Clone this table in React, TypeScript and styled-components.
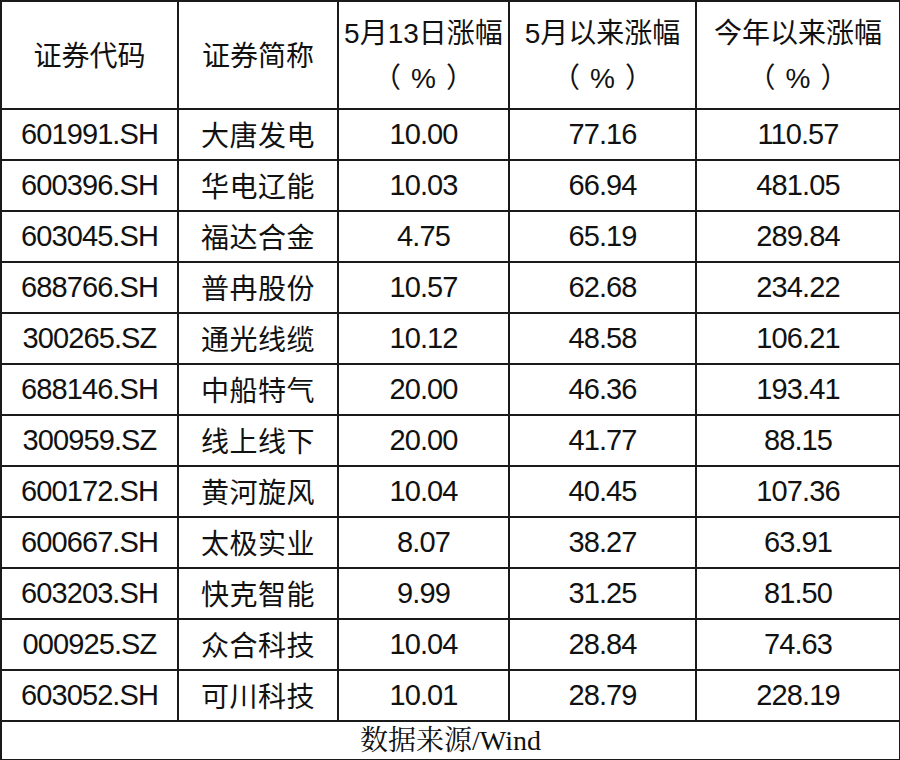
import React from "react";
import styled, { createGlobalStyle } from "styled-components";

const GlobalStyle = createGlobalStyle`
  html, body {
    margin: 0;
    padding: 0;
    background: #fff;
  }
`;

const Table = styled.table`
  width: 899px;
  margin: 0;
  border-collapse: collapse;
  table-layout: fixed;
  font-family: "Liberation Sans", Arial, "Noto Sans CJK SC", sans-serif;
  color: #111;
`;

const HeadCell = styled.th`
  height: 106px;
  padding: 0;
  border: 2px solid #1a1a1a;
  font-size: 28px;
  font-weight: normal;
  line-height: 43px;
  text-align: center;
  vertical-align: middle;
  white-space: nowrap;
`;

const Cell = styled.td<{ $cjk?: boolean }>`
  height: 49px;
  padding: 0;
  border: 2px solid #1a1a1a;
  font-size: ${p => (p.$cjk ? "28px" : "29px")};
  line-height: 49px;
  font-family: ${p =>
    p.$cjk
      ? `"Noto Sans CJK SC", "Liberation Sans", sans-serif`
      : `"Liberation Sans", Arial, sans-serif`};
  letter-spacing: ${p => (p.$cjk ? "0.5px" : "-0.9px")};
  text-align: center;
  vertical-align: middle;
  white-space: nowrap;
  overflow: hidden;
`;

const HeadText = styled.span`
  font-family: "Noto Sans CJK SC", "Liberation Sans", sans-serif;
`;

const Pct = styled.span`
  display: inline-block;
  padding: 0 10px;
  font-family: "Liberation Sans", Arial, sans-serif;
`;

const SourceCell = styled.td`
  height: 37px;
  padding: 0;
  border: 2px solid #1a1a1a;
  font-family: "Liberation Serif", "Noto Serif CJK SC", "Noto Sans CJK SC", serif;
  font-size: 28px;
  text-align: center;
  vertical-align: middle;
  line-height: 37px;
  overflow: hidden;
`;

const rows: [string, string, string, string, string][] = [
  ["601991.SH", "大唐发电", "10.00", "77.16", "110.57"],
  ["600396.SH", "华电辽能", "10.03", "66.94", "481.05"],
  ["603045.SH", "福达合金", "4.75", "65.19", "289.84"],
  ["688766.SH", "普冉股份", "10.57", "62.68", "234.22"],
  ["300265.SZ", "通光线缆", "10.12", "48.58", "106.21"],
  ["688146.SH", "中船特气", "20.00", "46.36", "193.41"],
  ["300959.SZ", "线上线下", "20.00", "41.77", "88.15"],
  ["600172.SH", "黄河旋风", "10.04", "40.45", "107.36"],
  ["600667.SH", "太极实业", "8.07", "38.27", "63.91"],
  ["603203.SH", "快克智能", "9.99", "31.25", "81.50"],
  ["000925.SZ", "众合科技", "10.04", "28.84", "74.63"],
  ["603052.SH", "可川科技", "10.01", "28.79", "228.19"],
];

const widths = [177, 160, 171, 187, 204];

const PctLine = () => (
  <HeadText>
    （<Pct>%</Pct>）
  </HeadText>
);

export default function App() {
  return (
    <>
      <GlobalStyle />
      <Table>
        <colgroup>
          {widths.map((w, i) => (
            <col key={i} style={{ width: w }} />
          ))}
        </colgroup>
        <thead>
          <tr>
            <HeadCell>
              <HeadText>证券代码</HeadText>
            </HeadCell>
            <HeadCell>
              <HeadText>证券简称</HeadText>
            </HeadCell>
            <HeadCell>
              5<HeadText>月</HeadText>13<HeadText>日涨幅</HeadText>
              <br />
              <PctLine />
            </HeadCell>
            <HeadCell>
              5<HeadText>月以来涨幅</HeadText>
              <br />
              <PctLine />
            </HeadCell>
            <HeadCell>
              <HeadText>今年以来涨幅</HeadText>
              <br />
              <PctLine />
            </HeadCell>
          </tr>
        </thead>
        <tbody>
          {rows.map(r => (
            <tr key={r[0]}>
              <Cell>{r[0]}</Cell>
              <Cell $cjk>{r[1]}</Cell>
              <Cell>{r[2]}</Cell>
              <Cell>{r[3]}</Cell>
              <Cell>{r[4]}</Cell>
            </tr>
          ))}
          <tr>
            <SourceCell colSpan={5}>数据来源/Wind</SourceCell>
          </tr>
        </tbody>
      </Table>
    </>
  );
}
